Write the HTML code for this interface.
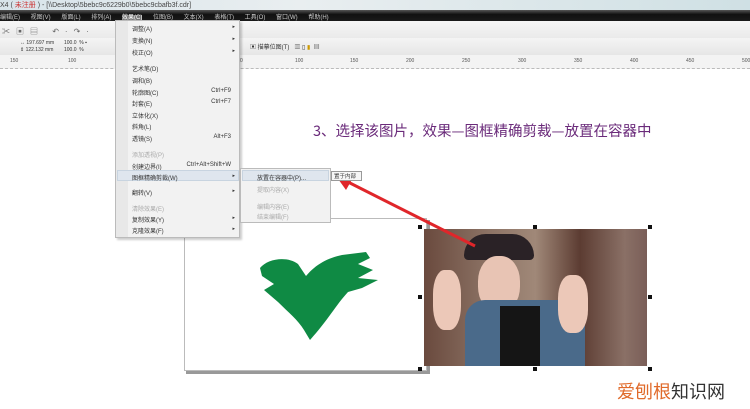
<!DOCTYPE html>
<html><head><meta charset="utf-8"><style>
*{margin:0;padding:0;box-sizing:border-box}
body{width:750px;height:409px;overflow:hidden;background:#fff;position:relative;font-family:"Liberation Sans","Noto Sans CJK SC",sans-serif;font-size:6px;color:#333}
.a{position:absolute}
.mi{position:absolute;left:16px;font-size:6px;color:#333;white-space:nowrap}
.dis{color:#aaa}
.sc{position:absolute;right:8px;font-size:6px}
.ar{position:absolute;right:4px;font-size:5px}
.h{position:absolute;width:4px;height:4px;background:#111}
</style></head><body>
<div class="a" style="left:0;top:0;width:750px;height:10px;background:linear-gradient(90deg,#d8e4ea,#e9eef0 40%,#cfe0e4)"></div>
<div class="a" style="left:0;top:0;font-size:7px;color:#444">X4 ( <span style="color:#c33">未注册</span> ) - [\\Desktop\5bebc9c6229b0\5bebc9cbafb3f.cdr]</div>
<div class="a" style="left:0;top:10px;width:750px;height:11px;background:linear-gradient(#555,#111 40%,#1a1a1a)"></div>
<div class="a" style="left:0;top:12px;font-size:6px;color:#ccc;word-spacing:9px;white-space:nowrap">编辑(E) 视图(V) 版面(L) 排列(A) <span style="background:#777;color:#fff">效果(C)</span> 位图(B) 文本(X) 表格(T) 工具(O) 窗口(W) 帮助(H)</div>
<div class="a" style="left:0;top:21px;width:750px;height:17px;background:linear-gradient(#f6f6f6,#eaeaea)"></div>
<div class="a" style="left:0;top:38px;width:750px;height:17px;background:linear-gradient(#f4f4f4,#e6e6e6)"></div>
<div class="a" style="left:2px;top:26px;font-size:8px;color:#666;letter-spacing:6px">✂▣▤ ↶·↷·</div>
<div class="a" style="left:20px;top:40px;font-size:5px;line-height:7px;color:#333">↔ 197.697 mm<br>⇕ 122.132 mm</div>
<div class="a" style="left:64px;top:40px;font-size:5px;line-height:7px;color:#333">100.0 &nbsp;% ▪<br>100.0 &nbsp;%</div>
<div class="a" style="left:250px;top:42px;font-size:6px;color:#333">▣ 描摹位图(T) &nbsp; ▥ ▯ <span style="color:#c90">▮</span> &nbsp;▤</div>
<div class="a" style="left:0;top:55px;width:750px;height:14px;background:#f3f3f3;border-bottom:1px dashed #bbb"></div>
<div class="a" style="left:0;top:58px;width:750px;font-size:5px;color:#555">
<span class="a" style="left:10px">150</span><span class="a" style="left:68px">100</span><span class="a" style="left:240px">0</span><span class="a" style="left:295px">100</span><span class="a" style="left:350px">150</span><span class="a" style="left:406px">200</span><span class="a" style="left:462px">250</span><span class="a" style="left:518px">300</span><span class="a" style="left:574px">350</span><span class="a" style="left:630px">400</span><span class="a" style="left:686px">450</span><span class="a" style="left:742px">500</span></div>
<div class="a" style="left:313px;top:120px;font-size:14.5px;color:#6a2a7a;font-family:'Noto Sans CJK SC',sans-serif;white-space:nowrap">3、选择该图片，效果—图框精确剪裁—放置在容器中</div>
<!-- page -->
<div class="a" style="left:186px;top:220px;width:244px;height:154px;background:#999"></div>
<div class="a" style="left:184px;top:218px;width:243px;height:153px;background:#fff;border:1px solid #bbb"></div>
<svg class="a" style="left:258px;top:250px" width="130" height="95" viewBox="0 0 130 95"><path d="M2,18 C10,8 30,6 40,14 L48,26 C58,14 70,8 84,5 L108,2 L112,8 L100,14 L115,20 L100,28 L120,30 L104,38 L90,42 C78,55 70,70 52,90 L46,80 C40,70 30,62 20,52 L6,40 L16,34 L4,26 Z" fill="#0f8a44"/></svg>
<!-- photo -->
<div class="a" style="left:424px;top:229px;width:223px;height:137px;background:linear-gradient(90deg,#6a4a3e,#8d7466 30%,#a08878 50%,#5c3c32 70%,#8a7066 90%,#7a5e58)"></div>
<div class="a" style="left:464px;top:234px;width:70px;height:26px;border-radius:30px 30px 6px 6px;background:#2a2226"></div>
<div class="a" style="left:478px;top:256px;width:42px;height:56px;border-radius:45%;background:#e8c4b4"></div>
<div class="a" style="left:465px;top:300px;width:120px;height:66px;border-radius:20px 20px 0 0;background:#4a6a8a"></div>
<div class="a" style="left:500px;top:306px;width:40px;height:60px;background:#151515"></div>
<div class="a" style="left:433px;top:270px;width:28px;height:60px;border-radius:40%;background:#ecc8b8"></div>
<div class="a" style="left:558px;top:275px;width:30px;height:58px;border-radius:40%;background:#ecc8b8"></div>
<div class="h" style="left:418px;top:225px"></div><div class="h" style="left:533px;top:225px"></div><div class="h" style="left:648px;top:225px"></div>
<div class="h" style="left:418px;top:295px"></div><div class="h" style="left:648px;top:295px"></div>
<div class="h" style="left:418px;top:367px"></div><div class="h" style="left:533px;top:367px"></div><div class="h" style="left:648px;top:367px"></div>
<!-- arrow -->
<svg class="a" style="left:330px;top:170px" width="150" height="80"><line x1="145" y1="76" x2="14" y2="10" stroke="#e0262a" stroke-width="3"/><path d="M6,6 L24,6 L16,20 Z" fill="#e0262a"/></svg>
<!-- menu -->
<div class="a" style="left:115px;top:20px;width:125px;height:218px;background:#f2f2f2;border:1px solid #bbb;box-shadow:2px 2px 2px rgba(0,0,0,.2)">
<div class="a" style="left:0;top:0;width:12px;height:216px;background:#e8e8e8"></div>
<div class="mi" style="top:3px">调整(A)</div><div class="ar" style="top:3px">▸</div>
<div class="mi" style="top:15px">变换(N)</div><div class="ar" style="top:15px">▸</div>
<div class="mi" style="top:27px">校正(O)</div><div class="ar" style="top:27px">▸</div>
<div class="mi" style="top:43px">艺术笔(D)</div>
<div class="mi" style="top:55px">调和(B)</div>
<div class="mi" style="top:67px">轮廓图(C)</div><div class="sc" style="top:67px">Ctrl+F9</div>
<div class="mi" style="top:78px">封套(E)</div><div class="sc" style="top:78px">Ctrl+F7</div>
<div class="mi" style="top:90px">立体化(X)</div>
<div class="mi" style="top:101px">斜角(L)</div>
<div class="mi" style="top:113px">透镜(S)</div><div class="sc" style="top:113px">Alt+F3</div>
<div class="mi dis" style="top:129px">添加透视(P)</div>
<div class="mi" style="top:141px">创建边界(I)</div><div class="sc" style="top:141px">Ctrl+Alt+Shift+W</div>
<div class="a" style="left:1px;top:149px;width:122px;height:11px;background:#dfe6ee;border:1px solid #c8d4e0"></div>
<div class="mi" style="top:152px">图框精确剪裁(W)</div><div class="ar" style="top:152px">▸</div>
<div class="mi" style="top:167px">翻转(V)</div><div class="ar" style="top:167px">▸</div>
<div class="mi dis" style="top:183px">清除效果(E)</div>
<div class="mi" style="top:194px">复制效果(Y)</div><div class="ar" style="top:194px">▸</div>
<div class="mi" style="top:205px">克隆效果(F)</div><div class="ar" style="top:205px">▸</div>
</div>
<div class="a" style="left:240px;top:168px;width:91px;height:55px;background:#f2f2f2;border:1px solid #bbb">
<div class="a" style="left:1px;top:1px;width:87px;height:11px;background:#dfe6ee;border:1px solid #c8d4e0"></div>
<div class="mi" style="left:16px;top:4px">放置在容器中(P)...</div>
<div class="mi dis" style="left:16px;top:16px">提取内容(X)</div>
<div class="mi dis" style="left:16px;top:33px">编辑内容(E)</div>
<div class="mi dis" style="left:16px;top:43px">结束编辑(F)</div>
</div>
<div class="a" style="left:331px;top:171px;width:31px;height:10px;background:#f6f6f6;border:1px solid #999;font-size:5.5px;padding-left:2px">置于内部</div>
<div class="a" style="left:617px;top:378px;font-size:18px;font-family:'Noto Sans CJK SC',sans-serif;white-space:nowrap"><span style="color:#e06a2a">爱刨根</span><span style="color:#333">知识网</span></div>
</body></html>
